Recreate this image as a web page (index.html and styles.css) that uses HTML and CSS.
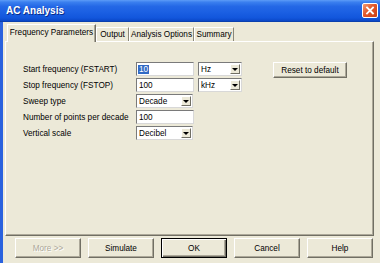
FILE: index.html
```html
<!DOCTYPE html>
<html>
<head>
<meta charset="utf-8">
<title>AC Analysis</title>
<link rel="stylesheet" href="styles.css">
</head>
<body>
<div class="window">
  <div class="titlebar">
    <span class="title">AC Analysis</span>
    <span class="close"><svg viewBox="0 0 16 15" width="16" height="15"><path d="M5 4.5 L11 10.5 M11 4.5 L5 10.5" stroke="#fff" stroke-width="1.8" stroke-linecap="square" fill="none"/></svg></span>
  </div>
  <div class="client">
    <div class="tabs">
      <div class="tab active w-freq">Frequency Parameters</div>
      <div class="tab w-out">Output</div>
      <div class="tab w-ana">Analysis Options</div>
      <div class="tab w-sum">Summary</div>
    </div>
    <div class="panel">
      <div class="content">
        <div class="form">
          <span class="label">Start frequency (FSTART)</span>
          <div class="input"><span class="sel">10</span></div>
          <div class="combo"><span class="val">Hz</span><span class="drop"></span></div>

          <span class="label">Stop frequency (FSTOP)</span>
          <div class="input"><span>100</span></div>
          <div class="combo"><span class="val">kHz</span><span class="drop"></span></div>

          <span class="label">Sweep type</span>
          <div class="combo short"><span class="val">Decade</span><span class="drop"></span></div>
          <span></span>

          <span class="label">Number of points per decade</span>
          <div class="input"><span>100</span></div>
          <span></span>

          <span class="label">Vertical scale</span>
          <div class="combo short"><span class="val">Decibel</span><span class="drop"></span></div>
          <span></span>
        </div>
        <div class="btn reset">Reset to default</div>
      </div>
    </div>
    <div class="buttons">
      <div class="btn disabled">More &gt;&gt;</div>
      <div class="btn">Simulate</div>
      <div class="btn default">OK</div>
      <div class="btn">Cancel</div>
      <div class="btn">Help</div>
    </div>
  </div>
</div>
</body>
</html>
```

FILE: styles.css
```css
* { box-sizing: border-box; }
html, body {
  margin: 0;
  padding: 0;
}
body {
  width: 380px;
  height: 263px;
  overflow: hidden;
  background: #ece9d8;
  font-family: "Liberation Sans", Arial, sans-serif;
  font-size: 8.2px;
  color: #000;
}
.window {
  display: flex;
  flex-direction: column;
  height: 263px;
}
.titlebar {
  height: 22px;
  flex: none;
  display: flex;
  align-items: center;
  justify-content: space-between;
  padding: 0 2px 0 6px;
  background: linear-gradient(#5d9cf7 0%, #3b80ef 10%, #2468e6 30%, #1a5fe2 60%, #1256dc 85%, #0a47c6 100%);
  border-bottom: 1px solid #0a3fae;
}
.title {
  color: #fff;
  font-weight: bold;
  font-size: 10px;
  text-shadow: 1px 1px 0 #0a2c8a;
}
.close {
  width: 16px;
  height: 15px;
  border: 1px solid #fff;
  border-radius: 2px;
  background: linear-gradient(135deg, #f39c74 0%, #e2582c 45%, #cc3f14 100%);
  display: flex;
}
.close svg { display: block; margin: -1px; }
.client {
  flex: 1;
  display: flex;
  flex-direction: column;
  border-left: 3px solid #2a62de;
  padding: 2px 6px 0 2px;
}
.tabs {
  display: flex;
  align-items: flex-end;
  height: 17px;
  margin-left: 2px;
  position: relative;
  z-index: 1;
}
.tab {
  height: 14px;
  display: flex;
  align-items: center;
  justify-content: center;
  border-top: 1px solid #fff;
  border-left: 1px solid #fff;
  border-right: 1px solid #8a8778;
  white-space: nowrap;
  background: #ece9d8;
}
.tab.active {
  height: 18px;
  margin-bottom: -1px;
  padding-bottom: 2px;
  border-right: 1px solid #716f64;
  box-shadow: inset -1px 0 0 #aca899;
}
.w-freq { width: 89px; }
.w-out { width: 33px; }
.w-ana { width: 65px; }
.w-sum { width: 40px; }
.panel {
  height: 195px;
  flex: none;
  border-top: 1px solid #fff;
  border-left: 1px solid #fff;
  border-right: 1px solid #716f64;
  border-bottom: 1px solid #716f64;
  box-shadow: inset -1px -1px 0 #aca899;
}
.content {
  display: flex;
  align-items: flex-start;
  padding: 20px 0 0 17px;
}
.form {
  display: grid;
  grid-template-columns: 109px 58px 44px;
  grid-auto-rows: 14px;
  column-gap: 4px;
  row-gap: 2px;
}
.label {
  display: flex;
  align-items: center;
  white-space: nowrap;
}
.input, .combo {
  background: #fff;
  border: 1px solid;
  border-color: #7a7a7a #d8d8d8 #d8d8d8 #7a7a7a;
  display: flex;
  align-items: center;
  padding-left: 2px;
}
.combo.short { width: 57px; }
.combo .val { flex: 1; }
.sel {
  background: #316ac5;
  color: #fff;
  padding: 0 1px;
  margin-left: -1px;
}
.drop {
  width: 10px;
  height: 10px;
  margin-right: 1px;
  background: #ece9d8;
  border: 1px solid;
  border-color: #fff #716f64 #716f64 #fff;
  display: flex;
  align-items: center;
  justify-content: center;
}
.drop::after {
  content: "";
  border-left: 3px solid transparent;
  border-right: 3px solid transparent;
  border-top: 3px solid #000;
}
.btn {
  display: flex;
  align-items: center;
  justify-content: center;
  background: #ece9d8;
  border: 1px solid;
  border-color: #fff #716f64 #716f64 #fff;
  box-shadow: inset -1px -1px 0 #aca899;
  white-space: nowrap;
}
.reset {
  width: 74px;
  height: 16px;
  margin-left: 31px;
}
.buttons {
  display: flex;
  gap: 7px;
  margin-top: 2px;
  padding-left: 10px;
}
.buttons .btn {
  width: 66px;
  height: 20px;
}
.btn.default {
  border: 1px solid #000;
  box-shadow: inset 1px 1px 0 #fff, inset -1px -1px 0 #716f64, inset -2px -2px 0 #aca899;
}
.btn.disabled {
  color: #aca899;
  text-shadow: 1px 1px 0 #fff;
}
```
